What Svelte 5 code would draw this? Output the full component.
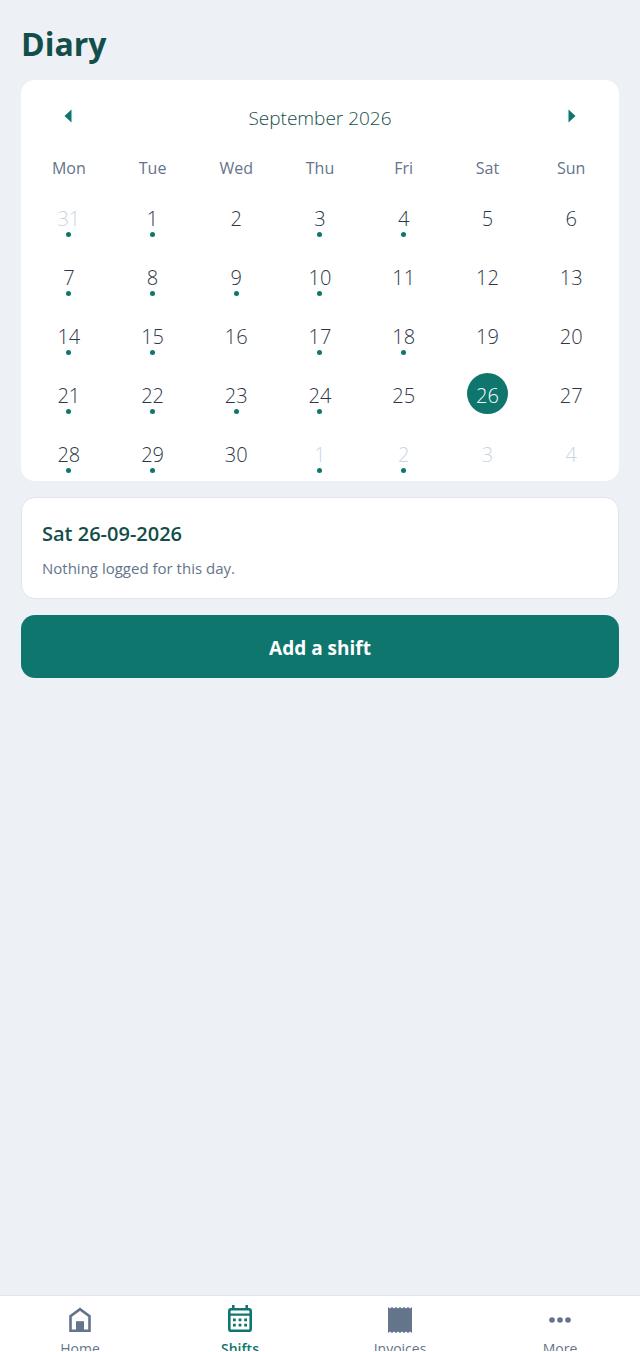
<script lang="ts">
	type Day = { day: number; outside: boolean; logged: boolean };

	const weekdays = ["Mon", "Tue", "Wed", "Thu", "Fri", "Sat", "Sun"];
	const loggedCells = [0, 1, 3, 4, 7, 8, 9, 10, 14, 15, 17, 18, 21, 22, 23, 24, 28, 29, 31, 32];
	const tabs = ["Home", "Shifts", "Invoices", "More"];

	let selected = $state(26);
	let activeTab = $state("Shifts");

	// the grid starts on Monday 31 August
	const days: Day[] = Array.from({ length: 35 }, (_, i) => ({
		day: i === 0 ? 31 : i > 30 ? i - 30 : i,
		outside: i === 0 || i > 30,
		logged: loggedCells.includes(i)
	}));

	// 7 September is a Monday, so the remainder is the weekday
	let title = $derived(
		weekdays[selected % 7] + " " + String(selected).padStart(2, "0") + "-09-2026"
	);

	function isSelected(d: Day) {
		return !d.outside && d.day === selected;
	}

	function selectDay(d: Day) {
		if (!d.outside) selected = d.day;
	}
</script>

<div class="screen">
	<main>
		<h1>Diary</h1>

		<section class="calendar" aria-label="Calendar">
			<div class="month">
				<button class="arrow" aria-label="Previous month">
					<svg width="8" height="14" viewBox="0 0 8 14"><path d="M7.5 0.5V13.5L0.5 7Z" /></svg>
				</button>
				<h2>September 2026</h2>
				<button class="arrow" aria-label="Next month">
					<svg width="8" height="14" viewBox="0 0 8 14"><path d="M0.5 0.5V13.5L7.5 7Z" /></svg>
				</button>
			</div>

			<div class="weekdays">
				{#each weekdays as name}
					<span>{name}</span>
				{/each}
			</div>

			<div class="days">
				{#each days as d}
					<button
						class="day"
						class:outside={d.outside}
						class:selected={isSelected(d)}
						onclick={() => selectDay(d)}
					>
						<span class="number">{d.day}</span>
						{#if d.logged}
							<span class="dot"></span>
						{/if}
					</button>
				{/each}
			</div>
		</section>

		<section class="summary">
			<h3>{title}</h3>
			<p>Nothing logged for this day.</p>
		</section>

		<button class="add">Add a shift</button>
	</main>

	<nav>
		{#each tabs as tab}
			<button class="tab" class:active={activeTab === tab} onclick={() => (activeTab = tab)}>
				<svg width="32" height="32" viewBox="0 0 32 32" aria-hidden="true">
					{#if tab === "Home"}
						<path d="M6.5 26.7V12.2L16 5.2L25.5 12.2V26.7Z" fill="none" stroke="currentColor" stroke-width="2.6" />
						<path d="M12 17.2H20V27H12Z" />
					{:else if tab === "Shifts"}
						<rect x="5.3" y="5.3" width="21.4" height="21.4" rx="1.8" fill="none" stroke="currentColor" stroke-width="2.6" />
						<path d="M8 1H10.6V6H8ZM21.4 1H24V6H21.4ZM5 9.4H27V11.8H5Z" />
						<path d="M9 14.4H11.8V17.2H9ZM14.6 14.4H17.4V17.2H14.6ZM20.2 14.4H23V17.2H20.2ZM9 19.8H11.8V22.6H9ZM14.6 19.8H17.4V22.6H14.6ZM20.2 19.8H23V22.6H20.2Z" />
					{:else if tab === "Invoices"}
						<path d="M4 3L6 4.6L8 3L10 4.6L12 3L14 4.6L16 3L18 4.6L20 3L22 4.6L24 3L26 4.6L28 3V29L26 27.4L24 29L22 27.4L20 29L18 27.4L16 29L14 27.4L12 29L10 27.4L8 29L6 27.4L4 29Z" />
					{:else}
						<circle cx="8" cy="16" r="2.8" />
						<circle cx="16" cy="16" r="2.8" />
						<circle cx="24" cy="16" r="2.8" />
					{/if}
				</svg>
				<span>{tab}</span>
			</button>
		{/each}
	</nav>
</div>

<style>
	:global(body) {
		background: #edf1f6;
		font-family: "Segoe UI", "Open Sans", "Noto Sans", sans-serif;
	}

	.screen {
		display: flex;
		flex-direction: column;
		height: 100vh;
		overflow: hidden;
	}

	main {
		flex: 1;
		display: flex;
		flex-direction: column;
		gap: 16px;
		padding: 24px 21px 0;
	}

	h1, h2, h3, p {
		margin: 0;
	}

	button {
		border: none;
		background: none;
		padding: 0;
		font-family: inherit;
		cursor: pointer;
	}

	h1 {
		color: #134e4a;
		font-size: 32px;
		line-height: 40px;
		font-weight: 700;
	}

	.calendar {
		background: white;
		border-radius: 14px;
		padding: 16px 6px 8px;
	}

	.month {
		display: flex;
		align-items: center;
		justify-content: space-between;
		height: 44px;
		padding: 0 19px;
	}

	.month h2 {
		color: #134e4a;
		font-size: 19px;
		font-weight: 300;
	}

	.arrow {
		display: flex;
		justify-content: center;
		width: 44px;
		padding-bottom: 4px;
	}

	.arrow svg {
		fill: #0f766e;
	}

	.weekdays {
		display: grid;
		grid-template-columns: repeat(7, 1fr);
		margin: 16px 0;
		color: #64748b;
		font-size: 16px;
		line-height: 24px;
		text-align: center;
	}

	.days {
		display: grid;
		grid-template-columns: repeat(7, 1fr);
		row-gap: 18px;
		justify-items: center;
	}

	.day {
		position: relative;
		width: 41px;
		height: 41px;
		padding-top: 4px;
		border-radius: 50%;
		color: #2d3748;
		font-size: 20px;
		font-weight: 300;
	}

	.day.outside {
		color: #cbd5e1;
	}

	.day.selected {
		background: #0f766e;
		color: white;
	}

	.dot {
		position: absolute;
		left: 18px;
		bottom: 0;
		width: 5px;
		height: 5px;
		border-radius: 50%;
		background: #0f766e;
	}

	.summary {
		background: white;
		border: 1px solid #dfe5ee;
		border-radius: 14px;
		padding: 20px 20px 18px;
	}

	.summary h3 {
		color: #134e4a;
		font-size: 20px;
		line-height: 32px;
		font-weight: 600;
	}

	.summary p {
		margin-top: 6px;
		color: #64748b;
		font-size: 15px;
		line-height: 24px;
	}

	.add {
		height: 63px;
		padding-top: 2px;
		border-radius: 14px;
		background: #0f766e;
		color: white;
		font-size: 19px;
		font-weight: 700;
	}

	nav {
		display: flex;
		background: white;
		border-top: 1px solid #dfe5ee;
		padding-bottom: 1px;
	}

	.tab {
		flex: 1;
		display: flex;
		flex-direction: column;
		align-items: center;
		height: 55px;
		padding-top: 8px;
		overflow: hidden;
		color: #64748b;
		font-size: 14px;
		line-height: 26px;
	}

	.tab.active {
		color: #0f766e;
		font-weight: 600;
	}

	.tab svg {
		flex-shrink: 0;
		fill: currentColor;
	}
</style>
